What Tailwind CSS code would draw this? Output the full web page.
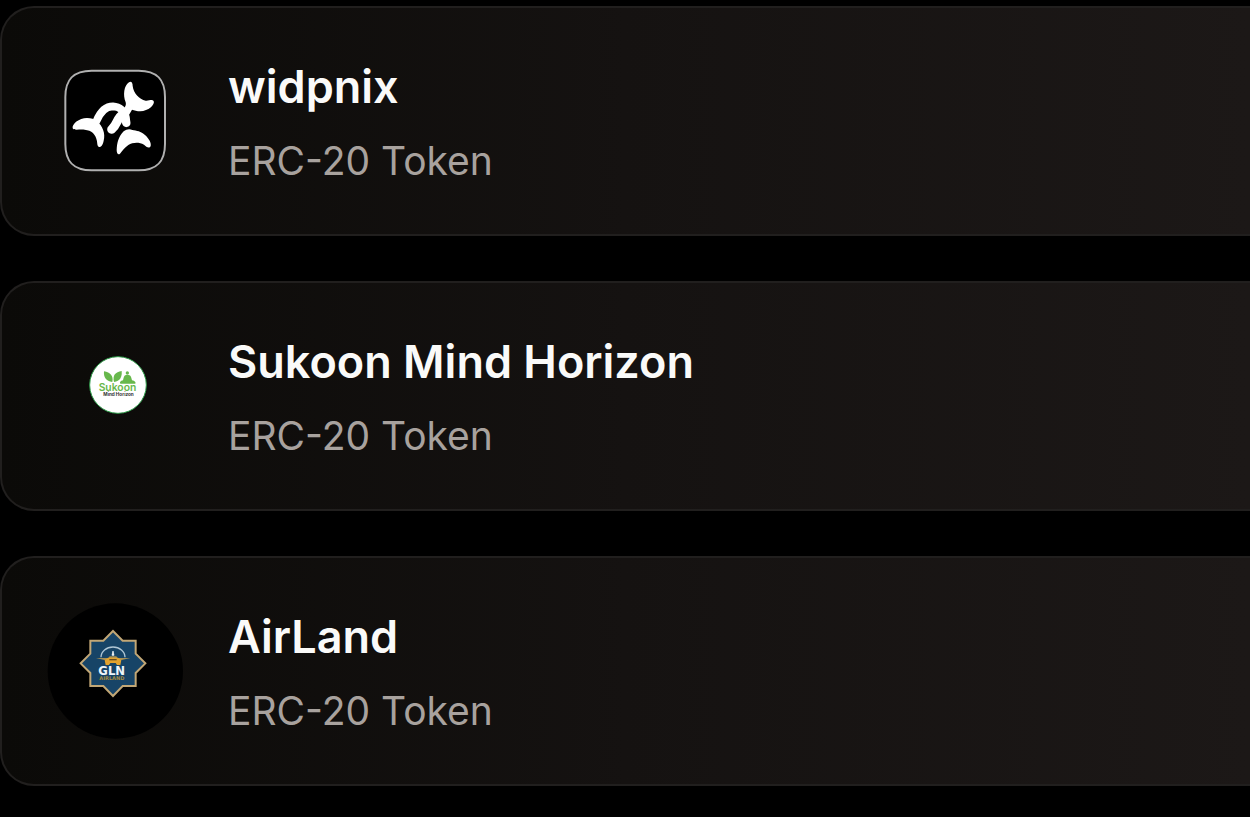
<!DOCTYPE html>
<html lang="en">
<head>
  <meta charset="UTF-8">
  <meta name="viewport" content="width=device-width, initial-scale=1.0">
  <title>Tokens</title>
  <script src="https://cdn.jsdelivr.net/npm/@tailwindcss/browser@4"></script>
</head>
<body class="bg-black font-['Inter',sans-serif] overflow-x-hidden">

  <!-- Token list -->
  <main class="flex flex-col gap-[45px] pt-[6px] pb-8">

    <!-- widpnix -->
    <article class="flex items-center gap-[45px] p-[45px] rounded-l-[34px] border-2 border-r-0 border-[#211f1e] bg-linear-to-r from-[#0b0a08] via-[#151211] to-[#1c1817]">
      <svg class="size-[136px] shrink-0" viewBox="-9 -21 408 408" role="img" aria-label="widpnix logo">
        <path d="M125 32 H266 C320 32 345 57 345 111 V252 C345 306 320 331 266 331 H125 C71 331 46 306 46 252 V111 C46 57 71 32 125 32Z" fill="#000" stroke="#b0b0b0" stroke-width="6"/>
        <g transform="translate(36 24)" fill="#fff">
          <!-- left tail -->
          <path d="M32 181 C29 168 51 150 75 150 C88 150 97 153 104 159 C122 173 131 197 125 218 C123 229 118 238 111 237 C106 236 106 229 105 220 C101 198 89 187 68 185 C52 183 37 189 32 181Z"/>
          <!-- top tail -->
          <path d="M179 131 C186 119 194 115 191 103 C182 82 186 52 201 43 C208 38 212 45 212 54 C215 76 231 94 251 98 C261 99 270 93 275 99 C280 110 259 129 235 130 C225 130 217 126 210 125 L197 148Z"/>
          <!-- bottom tail -->
          <path d="M185 190 C193 184 202 181 211 186 C224 188 237 190 249 201 C263 214 268 226 266 234 C262 243 253 237 246 230 C230 221 212 223 199 231 C187 239 180 250 174 257 C168 262 164 255 164 246 C165 224 170 205 185 190Z"/>
          <g fill="none" stroke="#fff" stroke-linecap="round">
            <path d="M103 160 C113 135 130 115 153 115 C174 116 187 130 190 147 L192 162" stroke-width="23"/>
            <path d="M183 138 C164 150 167 169 149 184" stroke-width="27"/>
            <path d="M190 145 L193 165" stroke-width="25"/>
          </g>
          <path d="M176 183 L209 179" stroke="#000" stroke-width="4"/>
        </g>
      </svg>
      <div class="flex flex-col gap-3">
        <h2 class="text-[45px] leading-[68px] font-semibold text-[#fafaf9]">widpnix</h2>
        <p class="text-[39px] leading-[56px] text-[#a8a29e]">ERC-20 Token</p>
      </div>
    </article>

    <!-- Sukoon Mind Horizon -->
    <article class="flex items-center gap-[45px] p-[45px] rounded-l-[34px] border-2 border-r-0 border-[#211f1e] bg-linear-to-r from-[#0b0a08] via-[#151211] to-[#1c1817]">
      <svg class="size-[136px] shrink-0" viewBox="-99 -66 408 408" role="img" aria-label="Sukoon Mind Horizon logo">
        <circle cx="114" cy="105" r="85" fill="#fff" stroke="#2d9b48" stroke-width="3"/>
        <g fill="#67b84c">
          <path d="M97 96 C78 93 70 82 72 64 C91 67 101 79 97 96Z"/>
          <path d="M102 96 C97 76 106 66 125 63 C127 81 120 93 102 96Z"/>
          <circle cx="142" cy="69" r="5"/>
          <path d="M138 75 H146 C153 76 154 83 156 91 C165 93 168 97 166 101 H121 C118 97 121 93 129 91 C131 83 132 76 138 75Z"/>
        </g>
        <text x="56" y="123" font-size="31" font-weight="600" fill="#67b84c">Sukoon</text>
        <text x="70" y="138" font-size="14" font-weight="700" fill="#333">Mind Horizon</text>
      </svg>
      <div class="flex flex-col gap-3">
        <h2 class="text-[45px] leading-[68px] font-semibold text-[#fafaf9]">Sukoon Mind Horizon</h2>
        <p class="text-[39px] leading-[56px] text-[#a8a29e]">ERC-20 Token</p>
      </div>
    </article>

    <!-- AirLand -->
    <article class="flex items-center gap-[45px] p-[45px] rounded-l-[34px] border-2 border-r-0 border-[#211f1e] bg-linear-to-r from-[#0b0a08] via-[#151211] to-[#1c1817]">
      <svg class="size-[136px] shrink-0" viewBox="21 24 408 408" role="img" aria-label="AirLand logo">
        <circle cx="226" cy="228" r="203" fill="#000"/>
        <path d="M219 108 L248 137 H287 V176 L316 205 L287 234 V273 H248 L219 303 L190 273 H151 V234 L122 205 L151 176 V137 H190Z" fill="#174467" stroke="#c2a776" stroke-width="6"/>
        <path d="M183 187 A36 31 0 0 1 255 187" fill="none" stroke="#afc6d5" stroke-width="4"/>
        <path d="M219 168 L222 181 H216Z" fill="#fff" stroke="#fff" stroke-width="2"/>
        <path d="M168 189 H205 L209 184 H229 L233 189 H271 L245 195 H193Z" fill="#a99054"/>
        <path d="M204 188 H234 L244 196 L241 210 H231 L227 204 H211 L207 210 H197 L194 196Z" fill="#e2a22e"/>
        <path d="M208 194 H230" stroke="#694d20" stroke-width="4"/>
        <text x="175" y="240" font-size="35" class="font-['DejaVu_Sans',sans-serif] font-bold" fill="#eef5fa">GLN</text>
        <text x="178" y="256" font-size="15" class="font-['DejaVu_Sans',sans-serif] font-bold" fill="#a38a43">AIRLAND</text>
      </svg>
      <div class="flex flex-col gap-3">
        <h2 class="text-[45px] leading-[68px] font-semibold text-[#fafaf9]">AirLand</h2>
        <p class="text-[39px] leading-[56px] text-[#a8a29e]">ERC-20 Token</p>
      </div>
    </article>

  </main>

</body>
</html>
